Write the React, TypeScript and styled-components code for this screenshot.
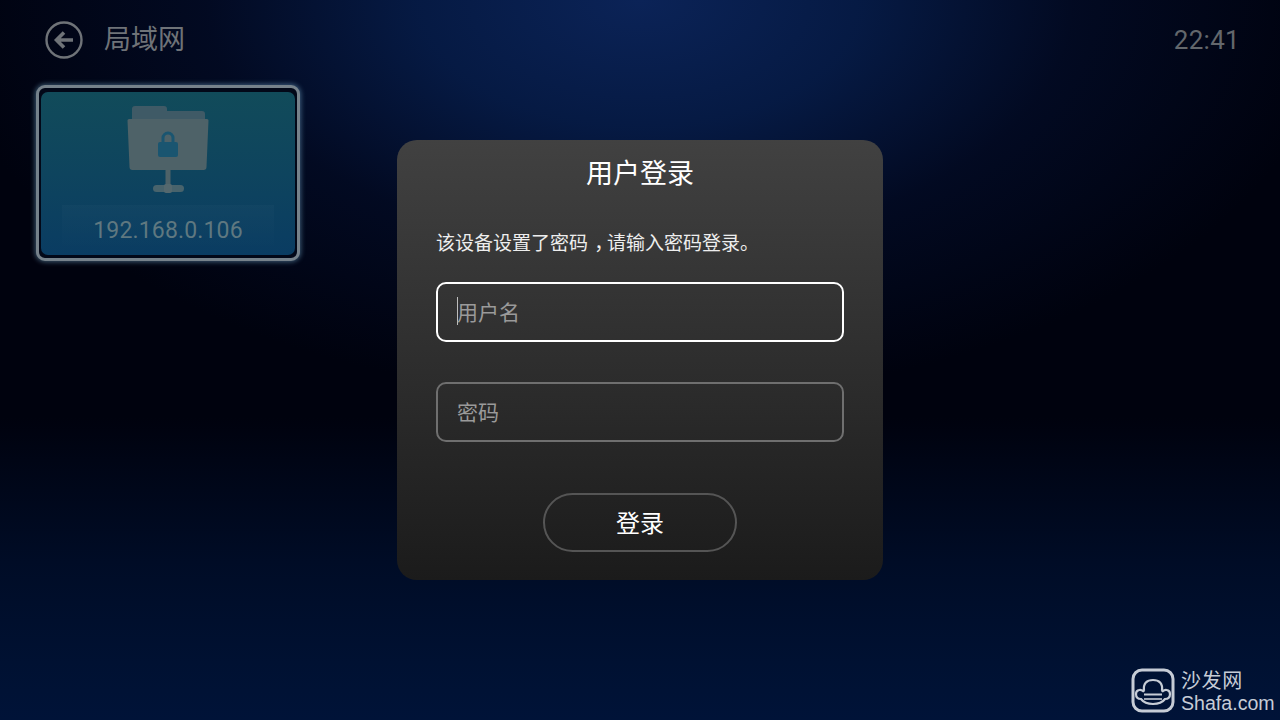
import React from 'react';
import styled, { createGlobalStyle } from 'styled-components';

const Global = createGlobalStyle`
  html, body { margin: 0; padding: 0; width: 1280px; height: 720px; overflow: hidden; background: #000410; }
  #root { width: 1280px; height: 720px; }
  * { box-sizing: border-box; }
`;

const Screen = styled.div`
  position: relative;
  width: 1280px;
  height: 720px;
  overflow: hidden;
  font-family: Roboto, "Noto Sans CJK SC", sans-serif;
  background:
    radial-gradient(ellipse 700px 400px at 640px 0px, #0b2357 0%, rgba(6, 27, 70, 0.95) 32%, rgba(3, 13, 42, 0.7) 62%, rgba(0, 2, 14, 0) 100%),
    linear-gradient(180deg, #00020e 0%, #00020e 58%, #000c26 78%, #001132 92%, #001338 100%);
`;

const Header = styled.header`
  display: flex;
  align-items: center;
  height: 80px;
  padding: 0 40px 0 45px;
  color: #6f7378;
`;

const BackIcon = styled.svg`
  width: 38px;
  height: 38px;
  flex: none;
`;

const HeaderTitle = styled.h1`
  margin: 0 0 0 21px;
  flex: 1;
  font-size: 27px;
  font-weight: 400;
  line-height: 30px;
  color: #6f7378;
`;

const Clock = styled.div`
  font-size: 26px;
  letter-spacing: 0.3px;
  color: #63676c;
`;

const Grid = styled.div`
  display: flex;
  padding: 5px 0 0 36px;
`;

const Card = styled.div`
  width: 264px;
  height: 176px;
  padding: 4px 2px 3px;
  border: 3px solid #76828b;
  border-radius: 9px;
  background: #020818;
  box-shadow: 0 0 5px 1px rgba(130, 190, 225, 0.45);
`;

const CardBody = styled.div`
  display: flex;
  flex-direction: column;
  align-items: center;
  height: 100%;
  border-radius: 7px;
  padding-top: 14px;
  background: linear-gradient(180deg, #114b5a 0%, #0e445e 50%, #0a3c62 100%);
`;

const FolderIcon = styled.svg`
  width: 84px;
  height: 90px;
  flex: none;
`;

const CardLabel = styled.div`
  width: 212px;
  height: 46px;
  margin-top: 9px;
  padding-top: 11px;
  text-align: center;
  font-size: 23px;
  line-height: 30px;
  letter-spacing: 0.15px;
  color: #5f7880;
  background: linear-gradient(180deg, rgba(255, 255, 255, 0.018) 0%, rgba(255, 255, 255, 0) 100%);
`;

const Dialog = styled.div`
  position: absolute;
  left: 397px;
  top: 140px;
  width: 486px;
  height: 440px;
  padding: 16px 39px 0;
  border-radius: 20px;
  background: linear-gradient(180deg, #414141 0%, #2e2e2e 50%, #1b1b1b 100%);
  display: flex;
  flex-direction: column;
`;

const DialogTitle = styled.h2`
  margin: 0;
  font-size: 27px;
  line-height: 36px;
  font-weight: 400;
  text-align: center;
  color: #fff;
`;

const Message = styled.p`
  margin: 38px 0 0;
  font-size: 19px;
  line-height: 28px;
  color: #eee;
  white-space: nowrap;
`;

const Comma = styled.span`
  margin-left: 0.33em;
  letter-spacing: -0.33em;
`;

const Field = styled.div<{ $focused?: boolean }>`
  display: flex;
  align-items: center;
  height: 60px;
  margin-top: ${p => (p.$focused ? '24px' : '40px')};
  padding: 0 0 2px 19px;
  border: 2px solid ${p => (p.$focused ? '#fff' : '#6f6f6f')};
  border-radius: 10px;
  font-size: 21px;
  color: #9a9a9a;
`;

const Caret = styled.span`
  width: 1px;
  height: 28px;
  margin-right: -1px;
  background: #bdbdbd;
`;

const LoginButton = styled.button`
  align-self: center;
  width: 194px;
  height: 59px;
  margin-top: 51px;
  padding: 0 0 2px;
  border: 2px solid #555;
  border-radius: 30px;
  background: transparent;
  font-family: inherit;
  font-size: 24px;
  color: #fff;
`;

const Watermark = styled.div`
  position: absolute;
  left: 1131px;
  top: 668px;
  display: flex;
  align-items: center;
  gap: 6px;
  color: #c6ccd6;
  font-family: "Liberation Sans", "Noto Sans CJK SC", sans-serif;
`;

const WatermarkIcon = styled.svg`
  width: 44px;
  height: 45px;
  flex: none;
`;

const WatermarkText = styled.div`
  display: flex;
  flex-direction: column;
`;

const WatermarkCn = styled.span`
  font-size: 20px;
  line-height: 24px;
  letter-spacing: 0.6px;
`;

const WatermarkEn = styled.span`
  font-size: 19.6px;
  line-height: 20px;
`;

export default function App() {
  return (
    <Screen>
      <Global />
      <Header>
        <BackIcon viewBox="0 0 38 38" fill="none" stroke="#6f7378">
          <circle cx="19" cy="19" r="17.5" strokeWidth="2.4" />
          <path d="M28 19H12M19 11.5L11.5 19L19 26.5" strokeWidth="3.6" />
        </BackIcon>
        <HeaderTitle>局域网</HeaderTitle>
        <Clock>22:41</Clock>
      </Header>
      <Grid>
        <Card>
          <CardBody>
            <FolderIcon viewBox="0 0 84 90">
              <path d="M6 3a3 3 0 0 1 3-3h29a3 3 0 0 1 3 3v2h35a3 3 0 0 1 3 3v8H6z" fill="#3f5a66" />
              <path d="M3 13h78a1.500 1.500 0 0 1 1.500 1.500L80.500 61a3 3 0 0 1-3 3H6.500a3 3 0 0 1-3-3L1.500 14.500A1.500 1.500 0 0 1 3 13z" fill="#4e6268" />
              <path d="M37 37v-5a5 5 0 0 1 10 0v5" fill="none" stroke="#1a5570" strokeWidth="3" />
              <rect x="32" y="36" width="20" height="15" rx="2" fill="#1a5570" />
              <rect x="39.500" y="64" width="5" height="16" fill="#4e6268" />
              <rect x="27" y="79" width="31" height="7" rx="3.500" fill="#48636c" />
              <rect x="38" y="78" width="8" height="9" rx="2" fill="#54686e" />
            </FolderIcon>
            <CardLabel>192.168.0.106</CardLabel>
          </CardBody>
        </Card>
      </Grid>
      <Dialog>
        <DialogTitle>用户登录</DialogTitle>
        <Message>该设备设置了密码<Comma>，</Comma>请输入密码登录。</Message>
        <Field $focused><Caret />用户名</Field>
        <Field>密码</Field>
        <LoginButton>登录</LoginButton>
      </Dialog>
      <Watermark>
        <WatermarkIcon viewBox="0 0 44 45" fill="none" stroke="#c6ccd6">
          <rect x="2" y="2" width="40" height="41" rx="9" strokeWidth="3" />
          <path d="M13 23C12 15 16 12 22 12S32 15 31 23" strokeWidth="2.2" />
          <path d="M13 24C11 21 5 21 5 26C5 29 7 31 10 31C13 35 17 36 22 36C27 36 31 35 34 31C37 31 39 29 39 26C39 21 33 21 31 24" strokeWidth="2.2" />
          <path d="M13 26.500H31" strokeWidth="2" />
          <path d="M13 31H31" strokeWidth="1.600" />
        </WatermarkIcon>
        <WatermarkText>
          <WatermarkCn>沙发网</WatermarkCn>
          <WatermarkEn>Shafa.com</WatermarkEn>
        </WatermarkText>
      </Watermark>
    </Screen>
  );
}
